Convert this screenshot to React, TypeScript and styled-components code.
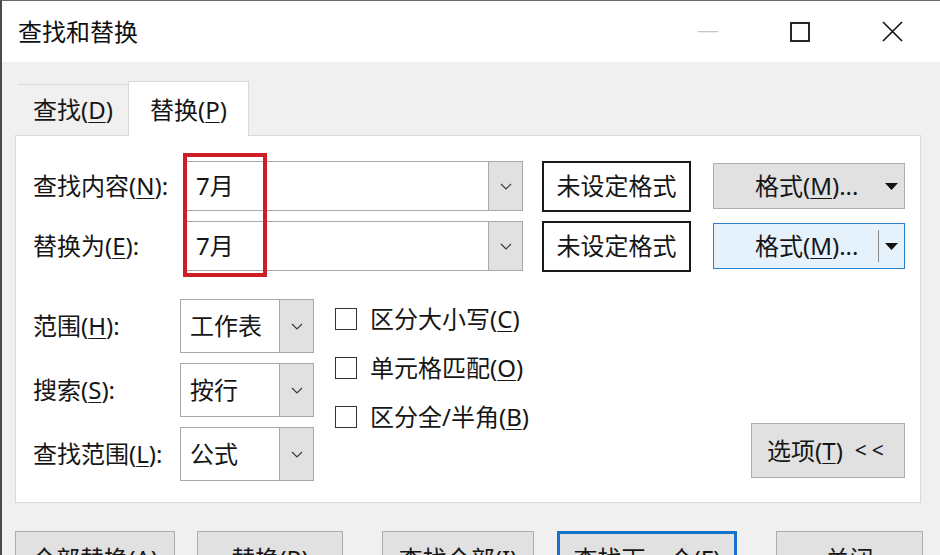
import React from "react";
import styled, { createGlobalStyle } from "styled-components";

const Global = createGlobalStyle`
  html, body { margin: 0; padding: 0; background: #f0f0f0; overflow: hidden; }
  body { font-family: "Noto Sans", "Noto Sans CJK SC", sans-serif; }
  * { box-sizing: border-box; }
`;

const Window = styled.div`
  width: 940px;
  height: 555px;
  border-left: 2px solid #4a4a4a;
  border-top: 1px solid #6a6a6a;
  background: #f0f0f0;
  display: flex;
  flex-direction: column;
  overflow: hidden;
  color: #161616;
  font-size: 24px;
  line-height: 1;
`;

const TitleBar = styled.div`
  height: 61px;
  flex: none;
  background: #fff;
  display: flex;
  align-items: center;
  padding: 0 2px 0 16px;
`;

const Title = styled.div`
  flex: 1;
  font-size: 24px;
  color: #111;
`;

const WinButton = styled.div`
  width: 92px;
  height: 100%;
  display: flex;
  align-items: center;
  justify-content: center;
`;

const Body = styled.div`
  flex: 1;
  display: flex;
  flex-direction: column;
  padding: 0 19px 0 13px;
`;

const TabStrip = styled.div`
  margin-top: 19px;
  height: 54px;
  display: flex;
  align-items: flex-end;
  position: relative;
  z-index: 1;
`;

const Tab = styled.div<{ $active?: boolean }>`
  display: flex;
  align-items: center;
  justify-content: center;
  width: ${(p) => (p.$active ? 121 : 110)}px;
  height: ${(p) => (p.$active ? 55 : 51)}px;
  margin-left: ${(p) => (p.$active ? 0 : 3)}px;
  margin-bottom: ${(p) => (p.$active ? -1 : 0)}px;
  padding-top: ${(p) => (p.$active ? 2 : 0)}px;
  background: ${(p) => (p.$active ? "#fff" : "transparent")};
  border: 1px solid ${(p) => (p.$active ? "#d9d9d9" : "transparent")};
  border-top-color: #d9d9d9;
  border-bottom: none;
  font-size: 24px;
`;

const Panel = styled.div`
  background: #fff;
  border: 1px solid #d9d9d9;
  padding: 25px 15px 21px 17px;
  display: flex;
  flex-direction: column;
`;

const TopRows = styled.div`
  position: relative;
  display: flex;
  flex-direction: column;
  gap: 10px;
`;

const Row = styled.div`
  height: 50px;
  display: flex;
  align-items: center;
`;

const Label = styled.div<{ $w: number }>`
  width: ${(p) => p.$w}px;
  flex: none;
  font-size: 24px;
  white-space: nowrap;
`;

const U = styled.span`
  text-decoration: underline;
  text-underline-offset: 3px;
  text-decoration-thickness: 1px;
`;

const Combo = styled.div<{ $w: number }>`
  width: ${(p) => p.$w}px;
  height: 100%;
  flex: none;
  display: flex;
  background: #fff;
  border: 1px solid #a8a8a8;
`;

const ComboText = styled.div`
  flex: 1;
  display: flex;
  align-items: center;
  padding-left: 9px;
  font-size: 24px;
`;

const DropPart = styled.div`
  width: 34px;
  flex: none;
  display: flex;
  align-items: center;
  justify-content: center;
  background: #e1e1e1;
  border-left: 1px solid #a8a8a8;
`;

const FormatState = styled.div`
  margin-left: 19px;
  width: 149px;
  height: 51px;
  flex: none;
  border: 2px solid #1a1a1a;
  display: flex;
  align-items: center;
  justify-content: center;
  font-size: 24px;
`;

const FormatButton = styled.div<{ $focus?: boolean }>`
  margin-left: 22px;
  width: 192px;
  height: 46px;
  flex: none;
  display: flex;
  align-items: center;
  background: ${(p) => (p.$focus ? "#e5f1fb" : "#e1e1e1")};
  border: 1px solid ${(p) => (p.$focus ? "#2c7fd0" : "#adadad")};
`;

const FormatLabel = styled.div`
  flex: 1;
  padding-left: 41px;
  font-size: 24px;
  white-space: nowrap;
`;

const SplitArrow = styled.div<{ $divided?: boolean }>`
  width: 25px;
  height: 32px;
  flex: none;
  display: flex;
  align-items: center;
  justify-content: center;
  border-left: 1px solid ${(p) => (p.$divided ? "#8a8a8a" : "transparent")};
  margin-right: 1px;
`;

const Highlight = styled.div`
  position: absolute;
  left: 150px;
  top: -8px;
  width: 84px;
  height: 124px;
  border: 4px solid #cf1d26;
  pointer-events: none;
`;

const Lower = styled.div`
  margin-top: 28px;
  display: flex;
  align-items: flex-start;
`;

const FieldGrid = styled.div`
  display: grid;
  grid-template-columns: 147px 134px;
  grid-auto-rows: 54px;
  row-gap: 10px;
  align-items: center;
`;

const Select = styled.div`
  height: 54px;
  display: flex;
  background: #fff;
  border: 1px solid #a8a8a8;
`;

const CheckList = styled.div`
  margin-left: 21px;
  margin-top: 9px;
  display: flex;
  flex-direction: column;
  gap: 27px;
`;

const CheckItem = styled.div`
  display: flex;
  align-items: center;
  height: 22px;
  font-size: 24px;
  white-space: nowrap;
`;

const Box = styled.span`
  width: 22px;
  height: 22px;
  border: 1.5px solid #333;
  background: #fff;
  margin-right: 13px;
  flex: none;
`;

const OptionsButton = styled.div`
  margin-left: auto;
  align-self: flex-end;
  margin-bottom: 3px;
  width: 154px;
  height: 55px;
  display: flex;
  align-items: center;
  justify-content: center;
  background: #e1e1e1;
  border: 1px solid #adadad;
  font-size: 24px;
  white-space: nowrap;
`;

const Chevrons = styled.span`
  margin-left: 12px;
  letter-spacing: 5px;
  font-size: 21px;
`;

const ButtonBar = styled.div`
  margin-top: 28px;
  display: flex;
`;

const ActionButton = styled.div<{ $w: number; $ml: number; $default?: boolean }>`
  width: ${(p) => p.$w}px;
  margin-left: ${(p) => p.$ml}px;
  height: 56px;
  flex: none;
  display: flex;
  align-items: center;
  justify-content: center;
  background: #e1e1e1;
  border: ${(p) => (p.$default ? "3px solid #1473cc" : "1px solid #adadad")};
  font-size: 24px;
  white-space: nowrap;
`;

const Chevron = () => (
  <svg width="12" height="7" viewBox="0 0 12 7">
    <path d="M1 1 L6 6 L11 1" fill="none" stroke="#3a3a3a" strokeWidth="1.2" />
  </svg>
);

const Triangle = () => (
  <svg width="13" height="7" viewBox="0 0 13 7">
    <path d="M0 0 H13 L6.5 7 Z" fill="#111" />
  </svg>
);

const fields = [
  { label: "范围", key: "H", value: "工作表" },
  { label: "搜索", key: "S", value: "按行" },
  { label: "查找范围", key: "L", value: "公式" },
];

const checks = [
  { label: "区分大小写", key: "C" },
  { label: "单元格匹配", key: "O" },
  { label: "区分全/半角", key: "B" },
];

const actions = [
  { label: "全部替换", key: "A", w: 160, ml: 0 },
  { label: "替换", key: "R", w: 146, ml: 22 },
  { label: "查找全部", key: "I", w: 152, ml: 39 },
  { label: "查找下一个", key: "F", w: 180, ml: 23, def: true },
  { label: "关闭", key: "", w: 147, ml: 39 },
];

export default function App() {
  const topRows = [
    { label: "查找内容", key: "N" },
    { label: "替换为", key: "E" },
  ];
  return (
    <>
      <Global />
      <Window>
        <TitleBar>
          <Title>查找和替换</Title>
          <WinButton>
            <svg width="20" height="2" viewBox="0 0 20 2">
              <rect width="20" height="1.3" fill="#c4c4c4" />
            </svg>
          </WinButton>
          <WinButton>
            <svg width="20" height="20" viewBox="0 0 20 20">
              <rect x="1" y="1" width="18" height="18" fill="none" stroke="#111" strokeWidth="1.8" />
            </svg>
          </WinButton>
          <WinButton>
            <svg width="21" height="21" viewBox="0 0 21 21">
              <path d="M1 1 L20 20 M20 1 L1 20" stroke="#111" strokeWidth="1.6" />
            </svg>
          </WinButton>
        </TitleBar>
        <Body>
          <TabStrip>
            <Tab>
              查找(<U>D</U>)
            </Tab>
            <Tab $active>
              替换(<U>P</U>)
            </Tab>
          </TabStrip>
          <Panel>
            <TopRows>
              {topRows.map((r, i) => (
                <Row key={r.key}>
                  <Label $w={153}>
                    {r.label}(<U>{r.key}</U>):
                  </Label>
                  <Combo $w={337}>
                    <ComboText>7月</ComboText>
                    <DropPart>
                      <Chevron />
                    </DropPart>
                  </Combo>
                  <FormatState>未设定格式</FormatState>
                  <FormatButton $focus={i === 1}>
                    <FormatLabel>
                      格式(<U>M</U>)...
                    </FormatLabel>
                    <SplitArrow $divided={i === 1}>
                      <Triangle />
                    </SplitArrow>
                  </FormatButton>
                </Row>
              ))}
              <Highlight />
            </TopRows>
            <Lower>
              <FieldGrid>
                {fields.map((f) => (
                  <React.Fragment key={f.key}>
                    <Label $w={147}>
                      {f.label}(<U>{f.key}</U>):
                    </Label>
                    <Select>
                      <ComboText>{f.value}</ComboText>
                      <DropPart>
                        <Chevron />
                      </DropPart>
                    </Select>
                  </React.Fragment>
                ))}
              </FieldGrid>
              <CheckList>
                {checks.map((c) => (
                  <CheckItem key={c.key}>
                    <Box />
                    {c.label}(<U>{c.key}</U>)
                  </CheckItem>
                ))}
              </CheckList>
              <OptionsButton>
                选项(<U>T</U>)<Chevrons>&lt;&lt;</Chevrons>
              </OptionsButton>
            </Lower>
          </Panel>
          <ButtonBar>
            {actions.map((a) => (
              <ActionButton key={a.label} $w={a.w} $ml={a.ml} $default={a.def}>
                {a.label}
                {a.key && (
                  <>
                    (<U>{a.key}</U>)
                  </>
                )}
              </ActionButton>
            ))}
          </ButtonBar>
        </Body>
      </Window>
    </>
  );
}
